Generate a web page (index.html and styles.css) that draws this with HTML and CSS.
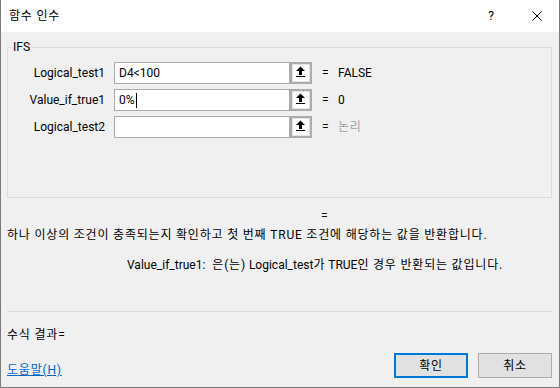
FILE: index.html
```html
<!DOCTYPE html>
<html lang="ko">
<head>
<meta charset="utf-8">
<title>함수 인수</title>
<link rel="stylesheet" href="styles.css">
</head>
<body>
<div class="dialog">
  <div class="titlebar">
    <div class="title ko">함수 인수</div>
    <div class="help">?</div>
    <div class="close">
      <svg width="10" height="10" viewBox="0 0 10 10"><path d="M0.5 0.5 L9.5 9.5 M9.5 0.5 L0.5 9.5" stroke="#000" stroke-width="1"/></svg>
    </div>
  </div>
  <div class="body">
    <fieldset class="group">
      <legend class="legend">IFS</legend>
      <div class="rows">
        <div class="row">
          <div class="label">Logical_test1</div>
          <div class="field">D4&lt;100</div>
          <div class="ref"><svg width="18" height="18" viewBox="0 0 18 18"><rect x="1" y="1" width="16" height="16" fill="#fff"/><polygon points="4,7 8.5,2.5 13,7" fill="#000"/><rect x="7" y="6.5" width="3" height="4.5" fill="#000"/><rect x="4" y="12" width="9" height="1" fill="#000"/></svg></div>
          <div class="eq">=</div>
          <div class="value">FALSE</div>
        </div>
        <div class="row">
          <div class="label">Value_if_true1</div>
          <div class="field">0%<span class="caret"></span></div>
          <div class="ref"><svg width="18" height="18" viewBox="0 0 18 18"><rect x="1" y="1" width="16" height="16" fill="#fff"/><polygon points="4,7 8.5,2.5 13,7" fill="#000"/><rect x="7" y="6.5" width="3" height="4.5" fill="#000"/><rect x="4" y="12" width="9" height="1" fill="#000"/></svg></div>
          <div class="eq">=</div>
          <div class="value">0</div>
        </div>
        <div class="row">
          <div class="label">Logical_test2</div>
          <div class="field"></div>
          <div class="ref"><svg width="18" height="18" viewBox="0 0 18 18"><rect x="1" y="1" width="16" height="16" fill="#fff"/><polygon points="4,7 8.5,2.5 13,7" fill="#000"/><rect x="7" y="6.5" width="3" height="4.5" fill="#000"/><rect x="4" y="12" width="9" height="1" fill="#000"/></svg></div>
          <div class="eq">=</div>
          <div class="value muted ko">논리</div>
        </div>
      </div>
    </fieldset>
    <div class="result-eq">=</div>
    <div class="desc ko">하나 이상의 조건이 충족되는지 확인하고 첫 번째 TRUE 조건에 해당하는 값을 반환합니다.</div>
    <div class="argdesc"><span class="argname">Value_if_true1:</span><span class="ko">은(는)</span> Logical_test<span class="ko">가</span> TRUE<span class="ko">인 경우 반환되는 값입니다.</span></div>
    <div class="separator"></div>
    <div class="formula ko">수식 결과=</div>
    <div class="footer">
      <a class="link ko" href="#">도움말(H)</a>
      <div class="buttons">
        <div class="btn primary ko">확인</div>
        <div class="btn ko">취소</div>
      </div>
    </div>
  </div>
</div>
</body>
</html>
```

FILE: styles.css
```css
html, body {
  margin: 0;
  padding: 0;
}
body {
  width: 560px;
  height: 388px;
  overflow: hidden;
  font-family: Roboto, "Noto Sans CJK KR", sans-serif;
  font-size: 12px;
  line-height: 16px;
  color: #000;
}
.ko {
  letter-spacing: 0.8px;
}
.dialog {
  box-sizing: border-box;
  width: 560px;
  height: 388px;
  background: #f0f0f0;
  border: 1px solid #7a7a7a;
  border-top: none;
  display: flex;
  flex-direction: column;
}
.titlebar {
  height: 32px;
  background: #fff;
  display: flex;
  align-items: center;
  flex-shrink: 0;
}
.title {
  flex: 1;
  padding-left: 8px;
  font-size: 12px;
}
.help {
  width: 46px;
  text-align: center;
}
.close {
  width: 45px;
  display: flex;
  justify-content: center;
  align-items: center;
}
.close svg { display: block; }
.body {
  padding: 0 7px 0 6px;
  display: flex;
  flex-direction: column;
}
.group {
  box-sizing: border-box;
  margin: 7px 0 0 0;
  height: 159px;
  padding: 7px 0 0 0;
  border: 1px solid #dcdcdc;
  min-width: 0;
}
.legend {
  margin-left: 4px;
  padding: 0 1px;
  line-height: 16px;
}
.rows {
  display: flex;
  flex-direction: column;
  gap: 5px;
}
.row {
  display: flex;
  align-items: center;
  height: 22px;
}
.label {
  width: 97px;
  text-align: right;
  margin-right: 9px;
}
.field {
  box-sizing: border-box;
  width: 176px;
  height: 22px;
  background: #fff;
  border: 1px solid #ababab;
  padding: 2px 4px;
  display: flex;
  align-items: center;
}
.caret {
  display: inline-block;
  width: 1px;
  height: 15px;
  background: #000;
  margin-left: 1px;
}
.ref {
  box-sizing: border-box;
  width: 22px;
  height: 22px;
  border: 2px solid #acacac;
  background: #e3e3e3;
}
.ref svg { display: block; }
.eq {
  width: 6px;
  margin: 0 10px;
}
.value.muted {
  color: #a0a0a0;
}
.result-eq {
  margin-top: 10px;
  padding-left: 314px;
}
.desc {
  margin-top: 3px;
}
.argdesc {
  margin-top: 14px;
  padding-left: 120px;
}
.argname {
  margin-right: 7px;
}
.separator {
  margin-top: 38px;
  height: 1px;
  background: #dcdcdc;
}
.formula {
  margin-top: 15px;
}
.footer {
  margin-top: 10px;
  display: flex;
  align-items: flex-end;
  justify-content: space-between;
}
.link {
  color: #0066cc;
  text-decoration: underline;
}
.buttons {
  display: flex;
  gap: 10px;
}
.btn {
  box-sizing: border-box;
  width: 74px;
  height: 25px;
  background: #e1e1e1;
  border: 1px solid #adadad;
  display: flex;
  align-items: center;
  justify-content: center;
}
.btn.primary {
  border: 2px solid #0078d7;
}
```
